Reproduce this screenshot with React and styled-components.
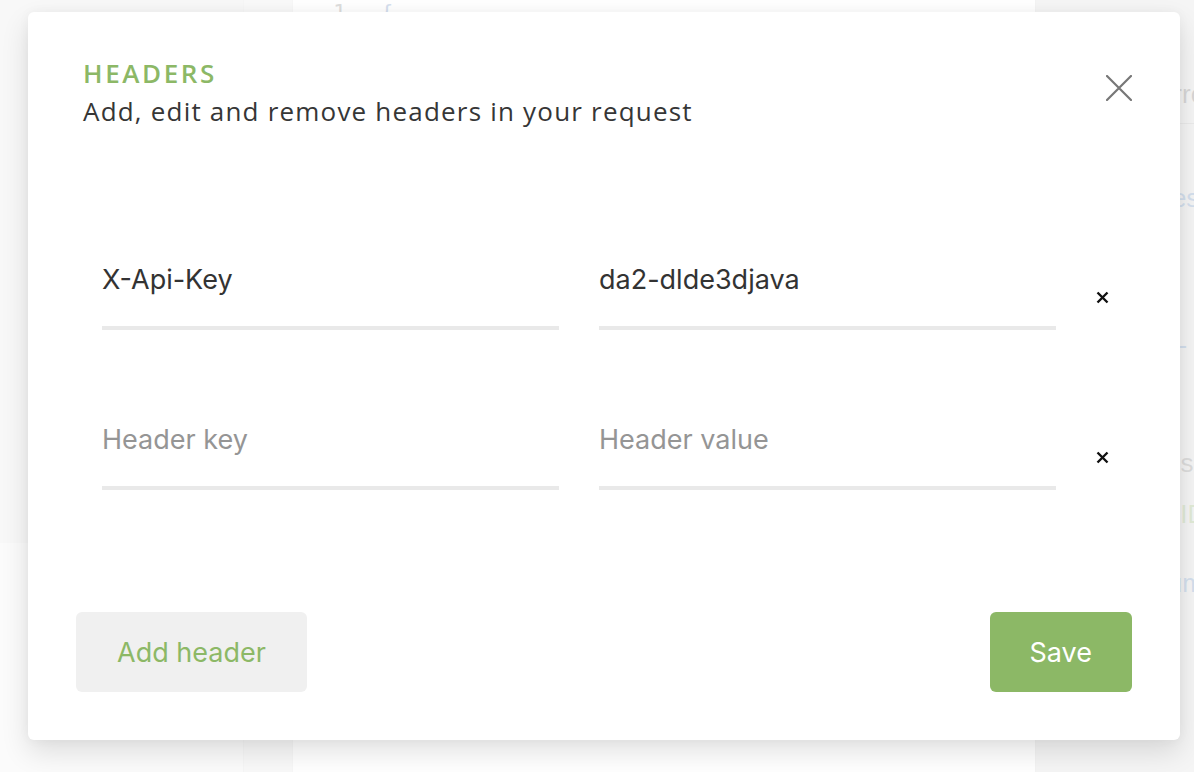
import React from 'react'
import styled, { createGlobalStyle } from 'styled-components'

const green = '#8cb866'

const GlobalStyle = createGlobalStyle`
  html, body {
    margin: 0;
    padding: 0;
    height: 100%;
    background: #ffffff;
    overflow: hidden;
  }
  * {
    box-sizing: border-box;
  }
`

const Page = styled.div`
  position: relative;
  width: 1194px;
  height: 772px;
  overflow: hidden;
  font-family: 'Open Sans', sans-serif;
`

const AppShell = styled.div`
  display: grid;
  grid-template-columns: 244px 48px 744px 1fr;
  height: 100%;
`

const Sidebar = styled.div`
  display: grid;
  grid-template-rows: 543px 1fr;
  border-right: 1px solid #cfcfcf;

  div:first-child {
    background: #d9d9d9;
  }
  div:last-child {
    background: #ebebeb;
  }
`

const Gutter = styled.div`
  background: #e1e1e1;
`

const Editor = styled.div`
  background: #ffffff;
  border-left: 1px solid #d4d4d4;
  border-right: 1px solid #c4c4c4;
  padding: 0 0 0 40px;
  font-family: 'DejaVu Sans Mono', monospace;
  font-size: 22px;
  line-height: 26px;
  color: #2f5fa8;

  span {
    color: #555;
    margin-right: 34px;
  }
`

const SidePanel = styled.div`
  background: #cdcdcd;
  display: flex;
  flex-direction: column;
  padding-top: 79px;
  font-family: 'Liberation Sans', sans-serif;
  font-size: 26px;
  line-height: 30px;
  white-space: nowrap;
`

const SideItem = styled.div`
  margin-top: ${p => p.$gap}px;
  padding-left: ${p => p.$indent}px;
  padding-bottom: ${p => (p.$line ? 14 : 0)}px;
  color: ${p => p.$color};
  border-bottom: ${p => (p.$line ? '1px solid #9a9a9a' : 'none')};
`

const Dim = styled.div`
  position: absolute;
  inset: 0;
  background: rgba(255, 255, 255, 0.8);
  padding: 12px 14px 32px 28px;
`

const Modal = styled.div`
  width: 1152px;
  height: 728px;
  background: #ffffff;
  border-radius: 6px;
  box-shadow: 0 12px 28px rgba(0, 0, 0, 0.12), 0 0 12px rgba(0, 0, 0, 0.04);
  padding: 46px 48px 48px 48px;
  display: flex;
  flex-direction: column;
`

const Header = styled.div`
  display: flex;
  justify-content: space-between;
  align-items: flex-start;
`

const Titles = styled.div`
  padding-left: 7px;
  display: flex;
  flex-direction: column;
  gap: 8px;
`

const Title = styled.h2`
  margin: 0;
  font-family: 'Open Sans', sans-serif;
  font-size: 26px;
  line-height: 30px;
  font-weight: 600;
  letter-spacing: 2.6px;
  color: ${green};
`

const Subtitle = styled.p`
  margin: 0;
  font-family: 'Open Sans', sans-serif;
  font-size: 26px;
  line-height: 30px;
  font-weight: 400;
  letter-spacing: 1.2px;
  color: #363636;
`

const CloseButton = styled.button`
  margin-top: 17px;
  width: 26px;
  height: 26px;
  padding: 0;
  border: none;
  background: none;
  cursor: pointer;
  display: flex;
`

const Rows = styled.div`
  margin-top: 120px;
  display: flex;
  flex-direction: column;
  gap: 76px;
`

const Row = styled.div`
  display: flex;
  align-items: flex-start;
  padding-left: 26px;
  gap: 40px;
`

const Field = styled.input`
  width: 458px;
  height: 84px;
  padding: 18px 0 32px;
  margin: 0;
  border: none;
  border-bottom: 4px solid #e9e9e9;
  outline: none;
  font-family: 'Inter', sans-serif;
  font-size: 27px;
  line-height: 30px;
  color: #333;
  background: transparent;

  &::placeholder {
    color: #959595;
  }
`

const Remove = styled.button`
  margin: 45px 23px 0 auto;
  width: 13px;
  height: 13px;
  padding: 0;
  border: none;
  background: none;
  cursor: pointer;
  display: flex;
`

const Footer = styled.div`
  margin-top: auto;
  display: flex;
  justify-content: space-between;
`

const Button = styled.button`
  height: 80px;
  padding: 0 ${p => (p.$primary ? 40 : 41)}px;
  border: none;
  border-radius: 6px;
  font-family: 'Inter', sans-serif;
  font-size: 27px;
  cursor: pointer;
  background: ${p => (p.$primary ? green : '#f0f0f0')};
  color: ${p => (p.$primary ? '#ffffff' : green)};
`

const CloseIcon = () => (
  <svg width="26" height="26" viewBox="0 0 26 26">
    <path d="M1 1 L25 25 M25 1 L1 25" stroke="#777" strokeWidth="2.2" strokeLinecap="round" />
  </svg>
)

const SmallX = () => (
  <svg width="13" height="13" viewBox="0 0 13 13">
    <path d="M1.5 1.5 L11.5 11.5 M11.5 1.5 L1.5 11.5" stroke="#111" strokeWidth="2.4" />
  </svg>
)

const headers = [
  { key: 'X-Api-Key', value: 'da2-dlde3djava' },
  { key: '', value: '' },
]

// faint panel behind the dialog, only the right edge of it peeks out
const sideItems = [
  { text: 'Errors', color: '#3a3a3a', gap: 0, indent: 120, line: true },
  { text: 'Types', color: '#2a64a8', gap: 59, indent: 94 },
  { text: 'Type -', color: '#2a64a8', gap: 117, indent: 79 },
  { text: 'Args', color: '#555', gap: 88, indent: 104 },
  { text: 'TypeID', color: '#6a9a3a', gap: 21, indent: 88 },
  { text: 'Enum', color: '#2a64a8', gap: 39, indent: 100 },
]

export default function App() {
  return (
    <Page>
      <GlobalStyle />
      <AppShell>
        <Sidebar>
          <div />
          <div />
        </Sidebar>
        <Gutter />
        <Editor>
          <span>1</span>{'{'}
        </Editor>
        <SidePanel>
          {sideItems.map(item => (
            <SideItem
              key={item.text}
              $gap={item.gap}
              $indent={item.indent}
              $color={item.color}
              $line={item.line}
            >
              {item.text}
            </SideItem>
          ))}
        </SidePanel>
      </AppShell>
      <Dim>
        <Modal>
          <Header>
            <Titles>
              <Title>HEADERS</Title>
              <Subtitle>Add, edit and remove headers in your request</Subtitle>
            </Titles>
            <CloseButton aria-label="Close">
              <CloseIcon />
            </CloseButton>
          </Header>
          <Rows>
            {headers.map((h, i) => (
              <Row key={i}>
                <Field defaultValue={h.key} placeholder="Header key" />
                <Field defaultValue={h.value} placeholder="Header value" />
                <Remove aria-label="Remove header">
                  <SmallX />
                </Remove>
              </Row>
            ))}
          </Rows>
          <Footer>
            <Button>Add header</Button>
            <Button $primary>Save</Button>
          </Footer>
        </Modal>
      </Dim>
    </Page>
  )
}
